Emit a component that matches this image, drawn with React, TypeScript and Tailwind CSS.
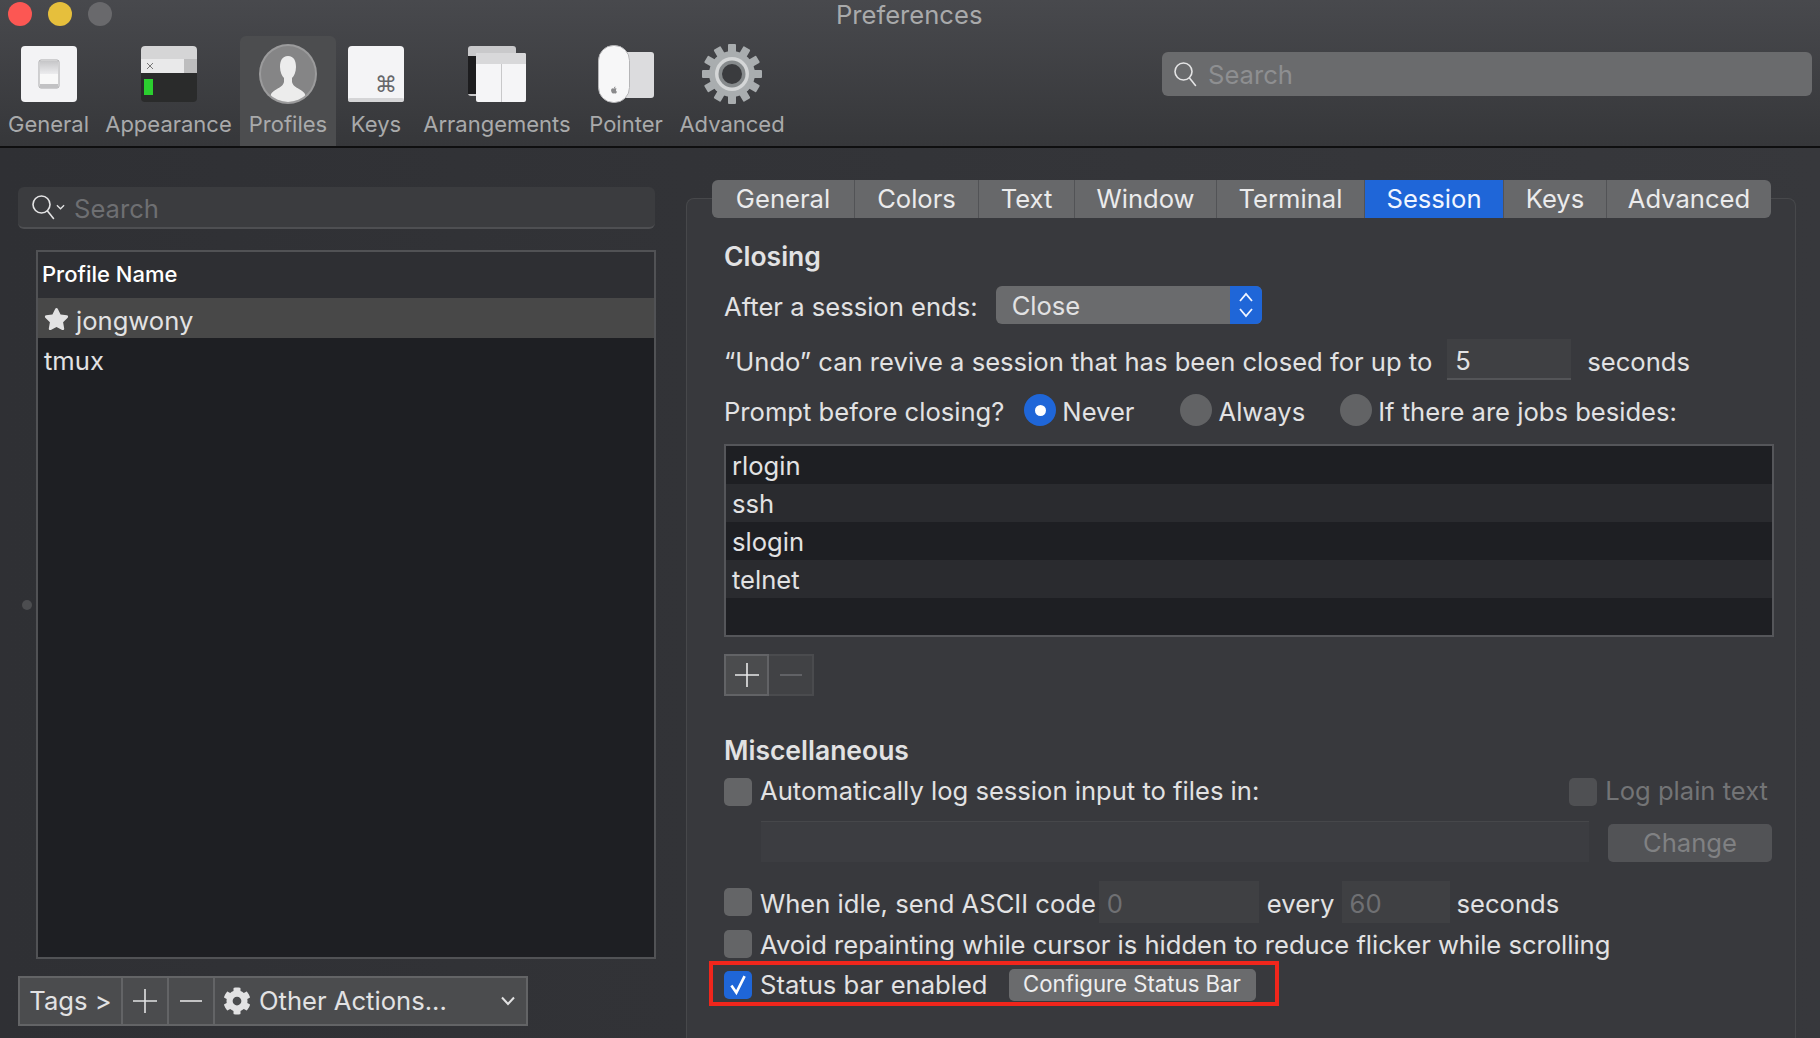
import { FaStar, FaCog, FaApple } from "react-icons/fa";

const fontCls = "font-['Inter','Liberation_Sans',sans-serif]";

function SearchGlass({ className }: { className?: string }) {
  return (
    <svg viewBox="0 0 24 26" className={className} fill="none" stroke="#e4e4e5" strokeWidth="1.6">
      <circle cx="10.5" cy="10.5" r="8.5" />
      <path d="M16.5 17 L22.5 24.5" strokeLinecap="round" />
    </svg>
  );
}

function GeneralIcon() {
  return (
    <svg viewBox="0 0 56 56" className="h-[56px] w-[56px]">
      <defs>
        <linearGradient id="sw" x1="0" y1="0" x2="0" y2="1">
          <stop offset="0" stopColor="#c6c6c8" />
          <stop offset="1" stopColor="#ececee" />
        </linearGradient>
      </defs>
      <rect x="0" y="0" width="56" height="56" rx="4" fill="#f3f3f5" />
      <rect x="18" y="14" width="20" height="28" rx="2" fill="#f8f8f8" stroke="#a9a9ab" strokeWidth="1" />
      <rect x="19" y="15" width="18" height="13" fill="url(#sw)" />
      <rect x="19" y="38" width="18" height="4" fill="#c2c2c4" />
    </svg>
  );
}

function AppearanceIcon() {
  return (
    <svg viewBox="0 0 56 56" className="h-[56px] w-[56px]">
      <rect x="0" y="0" width="56" height="56" rx="4" fill="#2a2b2b" />
      <path d="M0 4a4 4 0 0 1 4-4h48a4 4 0 0 1 4 4v9H0z" fill="#d5d5d6" />
      <rect x="0" y="13" width="43" height="14" fill="#e9e9ea" />
      <rect x="43" y="13" width="13" height="14" fill="#bdbdbe" />
      <path d="M6 17 L12 23 M12 17 L6 23" stroke="#777" strokeWidth="1" />
      <rect x="3" y="33" width="9" height="16" fill="#2bcf2f" />
    </svg>
  );
}

function ProfileIcon() {
  return (
    <svg viewBox="0 0 58 60" className="h-[60px] w-[58px]">
      <defs>
        <clipPath id="pf">
          <ellipse cx="29" cy="30" rx="27" ry="28" />
        </clipPath>
      </defs>
      <ellipse cx="29" cy="30" rx="29" ry="30" fill="#9b9b9c" />
      <ellipse cx="29" cy="30" rx="27" ry="28" fill="#858586" />
      <g clipPath="url(#pf)">
        <path
          d="M29 12c-6 0-8 5-8 11 0 5 2 9 4 11v4c-1 4-4 5-7 7-3 2-5 3-6 5l-1 6c5 3 12 4 18 4s13-1 18-4l-1-6c-1-2-3-3-6-5-3-2-6-3-7-7v-4c2-2 4-6 4-11 0-6-2-11-8-11z"
          fill="#ececec"
        />
      </g>
    </svg>
  );
}

function KeysIcon() {
  return (
    <svg viewBox="0 0 56 56" className="h-[56px] w-[56px]">
      <rect x="0" y="0" width="56" height="56" rx="4" fill="#f4f4f6" />
      <rect x="0" y="52" width="56" height="4" rx="2" fill="#d5d5d7" />
      <text x="38" y="46" textAnchor="middle" fontSize="22" fill="#66676a" fontFamily="DejaVu Sans">
        ⌘
      </text>
    </svg>
  );
}

function ArrangementsIcon() {
  return (
    <svg viewBox="0 0 58 56" className="h-[56px] w-[58px]">
      <rect x="0" y="0" width="48" height="50" rx="3" fill="#c9c9cb" />
      <rect x="0" y="10" width="10" height="38" fill="#1d1d1f" />
      <rect x="8" y="7" width="50" height="49" rx="2" fill="#f5f5f7" />
      <path d="M8 9a2 2 0 0 1 2-2h46a2 2 0 0 1 2 2v9H8z" fill="#d8d8da" />
      <rect x="33" y="18" width="1" height="38" fill="#c8c8ca" />
    </svg>
  );
}

function PointerIcon() {
  return (
    <div className="relative h-[58px] w-[56px]">
      <svg viewBox="0 0 56 58" className="h-[58px] w-[56px]">
        <rect x="26" y="7" width="30" height="46" rx="3" fill="#dcdcde" />
        <rect x="0.5" y="0.5" width="31" height="57" rx="15" fill="#f7f7f8" stroke="#b5b5b7" strokeWidth="1" />
      </svg>
      <FaApple className="absolute left-[12px] top-[41px] h-[8px] w-[8px] text-[#8a8a8c]" />
    </div>
  );
}

function AdvancedIcon() {
  const teeth = Array.from({ length: 12 }, (_, i) => i * 30);
  return (
    <svg viewBox="0 0 60 60" className="h-[60px] w-[60px]">
      {teeth.map((a) => (
        <rect key={a} x="26" y="0" width="8" height="12" rx="1" fill="#a9adaf" transform={`rotate(${a} 30 30)`} />
      ))}
      <circle cx="30" cy="30" r="23" fill="#a9adaf" />
      <circle cx="30" cy="30" r="17" fill="#d4d6d7" />
      <circle cx="30" cy="30" r="13.5" fill="#868a8c" />
      <circle cx="30" cy="30" r="10" fill="#3a3b3e" />
    </svg>
  );
}

function ToolbarItem({
  label,
  width,
  active,
  children,
}: {
  label: string;
  width: string;
  active?: boolean;
  children: React.ReactNode;
}) {
  return (
    <div
      className={`flex h-[110px] shrink-0 flex-col items-center ${width} ${
        active ? "rounded-t-md bg-[#4c4d4f]" : ""
      }`}
    >
      <div className="flex h-[70px] items-center pt-[5px]">{children}</div>
      <span className="mt-[4px] text-[22px] leading-[28px] text-[#a9aaab]">{label}</span>
    </div>
  );
}

function Checkbox({ checked, dim }: { checked?: boolean; dim?: boolean }) {
  return (
    <span
      className={`flex h-[28px] w-[28px] shrink-0 items-center justify-center rounded-[5px] ${
        checked ? "bg-[#1f66d8]" : dim ? "bg-[#4f5053]" : "bg-[#646567]"
      }`}
    >
      {checked && (
        <svg viewBox="0 0 20 20" className="h-[24px] w-[22px]" fill="none" stroke="#ffffff" strokeWidth="2.4">
          <path d="M4 10.5 L8.5 17 L16 2" />
        </svg>
      )}
    </span>
  );
}

function Radio({ checked }: { checked?: boolean }) {
  return (
    <span
      className={`flex h-[32px] w-[32px] shrink-0 items-center justify-center rounded-full ${
        checked ? "bg-[#1f66d8]" : "bg-[#626365]"
      }`}
    >
      {checked && <span className="h-[11px] w-[11px] rounded-full bg-white" />}
    </span>
  );
}

const tabs = [
  { name: "General", w: "w-[143px]" },
  { name: "Colors", w: "w-[124px]" },
  { name: "Text", w: "w-[96px]" },
  { name: "Window", w: "w-[142px]" },
  { name: "Terminal", w: "w-[148px]" },
  { name: "Session", w: "w-[139px]", active: true },
  { name: "Keys", w: "w-[103px]" },
  { name: "Advanced", w: "w-[164px]" },
];

const jobs = ["rlogin", "ssh", "slogin", "telnet", ""];

export default function App() {
  return (
    <div className={`relative flex h-[1038px] w-[1820px] flex-col overflow-hidden bg-[#36373b] text-[25.6px] text-[#e2e2e3] ${fontCls}`}>
      {/* titlebar + toolbar */}
      <header className="h-[148px] shrink-0 border-b-2 border-[#0f0f10] bg-gradient-to-b from-[#48494d] to-[#36373a]">
        <div className="relative flex h-[36px] items-start">
          <div className="flex gap-[16px] pl-[8px] pt-[2px]">
            <span className="h-[24px] w-[24px] rounded-full bg-[#fc5753]" />
            <span className="h-[24px] w-[24px] rounded-full bg-[#e6bf3c]" />
            <span className="h-[24px] w-[24px] rounded-full bg-[#69696c]" />
          </div>
          <span className="ml-[724px] text-[25.6px] leading-[30px] text-[#a9aaab]">Preferences</span>
        </div>
        <div className="flex">
          <ToolbarItem label="General" width="w-[97px]">
            <GeneralIcon />
          </ToolbarItem>
          <ToolbarItem label="Appearance" width="w-[143px]">
            <AppearanceIcon />
          </ToolbarItem>
          <ToolbarItem label="Profiles" width="w-[96px]" active>
            <ProfileIcon />
          </ToolbarItem>
          <ToolbarItem label="Keys" width="w-[80px]">
            <KeysIcon />
          </ToolbarItem>
          <ToolbarItem label="Arrangements" width="w-[162px]">
            <ArrangementsIcon />
          </ToolbarItem>
          <ToolbarItem label="Pointer" width="w-[96px]">
            <PointerIcon />
          </ToolbarItem>
          <ToolbarItem label="Advanced" width="w-[116px]">
            <AdvancedIcon />
          </ToolbarItem>
          <div className="ml-[372px] mt-[16px] flex h-[44px] w-[650px] items-center rounded-[6px] bg-[#6a6b6d] pl-[11px]">
            <SearchGlass className="h-[26px] w-[24px]" />
            <span className="ml-[11px] pt-[3px] text-[#8e8f91]">Search</span>
          </div>
        </div>
      </header>

      <div className="flex min-h-0 flex-1 bg-gradient-to-r from-[#2f3034] to-[#37383c]">
        {/* profile list */}
        <aside className="relative w-[686px] shrink-0 pl-[18px] pt-[39px]">
          <div className="flex h-[42px] w-[637px] items-center rounded-[6px] border-b-2 border-[#4e4f52] bg-[#3b3c3f] pl-[13px]">
            <SearchGlass className="h-[26px] w-[24px]" />
            <svg viewBox="0 0 10 6" className="ml-[1px] h-[6px] w-[9px]" fill="none" stroke="#e4e4e5" strokeWidth="1.4">
              <path d="M1 1 L5 5 L9 1" />
            </svg>
            <span className="ml-[9px] pt-[4px] text-[#6e6f72]">Search</span>
          </div>
          <div className="ml-[18px] mt-[21px] flex h-[709px] w-[620px] flex-col border-2 border-[#515255] bg-[#1e1f23]">
            <div className="flex h-[46px] shrink-0 items-center bg-[#2e2f33] pb-[2px] pl-[4px] text-[22px] font-medium text-white">
              Profile Name
            </div>
            <div className="flex h-[40px] shrink-0 items-center bg-[#484848] pl-[6px] pt-[2px]">
              <FaStar className="h-[24px] w-[25px] text-[#e2e2e3]" />
              <span className="ml-[7px] pt-[4px]">jongwony</span>
            </div>
            <div className="flex h-[40px] shrink-0 items-center pl-[6px] pt-[6px]">tmux</div>
          </div>
          <div className="mt-[17px] flex h-[50px] w-[510px] border-2 border-[#636466] bg-[#4b4c4e]">
            <div className="flex w-[103px] items-center justify-center border-r-2 border-[#636466] pt-[1px]">Tags &gt;</div>
            <div className="flex w-[46px] items-center justify-center border-r-2 border-[#636466]">
              <svg viewBox="0 0 24 24" className="h-[24px] w-[24px]" stroke="#e2e2e3" strokeWidth="1.6">
                <path d="M12 0V24M0 12H24" />
              </svg>
            </div>
            <div className="flex w-[46px] items-center justify-center border-r-2 border-[#636466]">
              <svg viewBox="0 0 24 24" className="h-[24px] w-[24px]" stroke="#e2e2e3" strokeWidth="1.6">
                <path d="M1 12H23" />
              </svg>
            </div>
            <div className="flex flex-1 items-center pl-[8px]">
              <FaCog className="h-[28px] w-[28px] text-[#e2e2e3]" />
              <span className="ml-[8px] pt-[1px]">Other Actions...</span>
              <svg viewBox="0 0 14 10" className="ml-auto mr-[11px] h-[10px] w-[14px]" fill="none" stroke="#e2e2e3" strokeWidth="2">
                <path d="M1 1.5 L7 8 L13 1.5" />
              </svg>
            </div>
          </div>
          <span className="absolute left-[22px] top-[452px] h-[10px] w-[10px] rounded-full bg-[#4c4d50]" />
        </aside>

        {/* session settings */}
        <main className="flex-1 pt-[32px]">
          <div className="relative z-10 ml-[26px] flex h-[38px] w-[1059px] overflow-hidden rounded-[6px] bg-[#67686a] text-[#ebebec]">
            {tabs.map((t) => (
              <div
                key={t.name}
                className={`flex items-center justify-center border-r border-[#525356] last:border-r-0 ${t.w} ${
                  t.active ? "bg-[#1f66d8] text-[#f2f6ff]" : ""
                }`}
              >
                {t.name}
              </div>
            ))}
          </div>
          <section className="-mt-[20px] h-[900px] w-[1110px] rounded-t-[8px] border border-b-0 border-[#47484b] bg-[#38393d] pl-[37px] pt-[42px]">
            <h2 className="h-[30px] text-[26.5px] font-semibold leading-[30px]">Closing</h2>

            <div className="mt-[15px] flex h-[38px] items-center">
              <span className="pt-[4px]">After a session ends:</span>
              <div className="ml-[18px] flex h-[38px] w-[266px] overflow-hidden rounded-[6px] bg-[#6a6b6d]">
                <span className="flex-1 pl-[16px] pt-[1px] leading-[38px]">Close</span>
                <span className="flex w-[32px] items-center justify-center bg-[#1f66d8]">
                  <svg viewBox="0 0 16 28" className="h-[28px] w-[16px]" fill="none" stroke="#f0f4ff" strokeWidth="1.8">
                    <path d="M2 10 L8 3 L14 10 M2 18 L8 25 L14 18" />
                  </svg>
                </span>
              </div>
            </div>

            <div className="mt-[15px] flex h-[41px] items-center">
              <span className="pt-[6px]">“Undo” can revive a session that has been closed for up to</span>
              <span className="ml-[15px] flex h-[41px] w-[124px] items-center border-b-2 border-[#545558] bg-[#3f4043] pl-[8px] pt-[6px]">5</span>
              <span className="ml-[16px] pt-[6px]">seconds</span>
            </div>

            <div className="mt-[14px] flex h-[32px] items-center">
              <span className="pt-[4px]">Prompt before closing?</span>
              <span className="ml-[20px]">
                <Radio checked />
              </span>
              <span className="ml-[6px] pt-[4px]">Never</span>
              <span className="ml-[45px]">
                <Radio />
              </span>
              <span className="ml-[7px] pt-[4px]">Always</span>
              <span className="ml-[35px]">
                <Radio />
              </span>
              <span className="ml-[6px] pt-[4px]">If there are jobs besides:</span>
            </div>

            <div className="mt-[18px] h-[193px] w-[1050px] border-2 border-[#55565a] bg-[#1e1f23]">
              {jobs.map((j, i) => (
                <div key={i} className={`flex h-[38px] items-center pl-[6px] pt-[2px] ${i % 2 === 1 ? "bg-[#2a2b2f]" : ""}`}>
                  {j}
                </div>
              ))}
            </div>

            <div className="mt-[17px] flex h-[42px] w-[90px]">
              <span className="flex w-[45px] items-center justify-center border-2 border-[#626366] bg-[#4b4c4e]">
                <svg viewBox="0 0 24 24" className="h-[24px] w-[24px]" stroke="#e8e8e9" strokeWidth="1.6">
                  <path d="M12 0V24M0 12H24" />
                </svg>
              </span>
              <span className="flex w-[45px] items-center justify-center border-2 border-l-0 border-[#4a4b4e] bg-[#414245]">
                <svg viewBox="0 0 24 24" className="h-[24px] w-[24px]" stroke="#66676a" strokeWidth="1.8">
                  <path d="M1 12H23" />
                </svg>
              </span>
            </div>

            <h2 className="mt-[39px] h-[30px] text-[26.5px] font-semibold leading-[30px]">Miscellaneous</h2>

            <div className="mt-[11px] flex h-[32px] w-[1044px] items-center">
              <Checkbox />
              <span className="ml-[8px] pb-[2px]">Automatically log session input to files in:</span>
              <span className="ml-auto">
                <Checkbox dim />
              </span>
              <span className="ml-[8px] pb-[2px] text-[#737476]">Log plain text</span>
            </div>

            <div className="mt-[13px] flex h-[41px] items-end pl-[37px]">
              <span className="h-[41px] w-[828px] border-t border-[#46474a] bg-[#3c3d41]" />
              <span className="ml-[19px] flex h-[38px] w-[164px] items-center justify-center rounded-[5px] bg-[#525356] text-[#808183]">
                Change
              </span>
            </div>

            <div className="mt-[19px] flex h-[42px] items-center">
              <Checkbox />
              <span className="ml-[8px] pt-[4px]">When idle, send ASCII code</span>
              <span className="ml-[3px] flex h-[42px] w-[160px] items-center bg-[#3f4043] pl-[8px] pt-[4px] text-[#6f7073]">0</span>
              <span className="ml-[8px] pt-[4px]">every</span>
              <span className="ml-[7px] flex h-[42px] w-[108px] items-center bg-[#3f4043] pl-[8px] pt-[4px] text-[#6f7073]">60</span>
              <span className="ml-[7px] pt-[4px]">seconds</span>
            </div>

            <div className="mt-[5px] flex h-[32px] items-center">
              <Checkbox />
              <span className="ml-[8px] pt-[2px] tracking-[-0.02px]">Avoid repainting while cursor is hidden to reduce flicker while scrolling</span>
            </div>

            <div className="mt-[9px] flex h-[32px] items-center">
              <Checkbox checked />
              <span className="ml-[8px]">Status bar enabled</span>
              <span className="ml-[21px] flex h-[32px] w-[247px] items-center justify-center rounded-[5px] bg-[#6a6b6d] pb-[2px] text-[22.2px] text-[#eeeeef]">
                Configure Status Bar
              </span>
            </div>
          </section>
        </main>
      </div>

      {/* red annotation */}
      <div className="pointer-events-none absolute left-[709px] top-[961px] h-[45px] w-[570px] border-[4px] border-[#f0261c]" />
    </div>
  );
}
